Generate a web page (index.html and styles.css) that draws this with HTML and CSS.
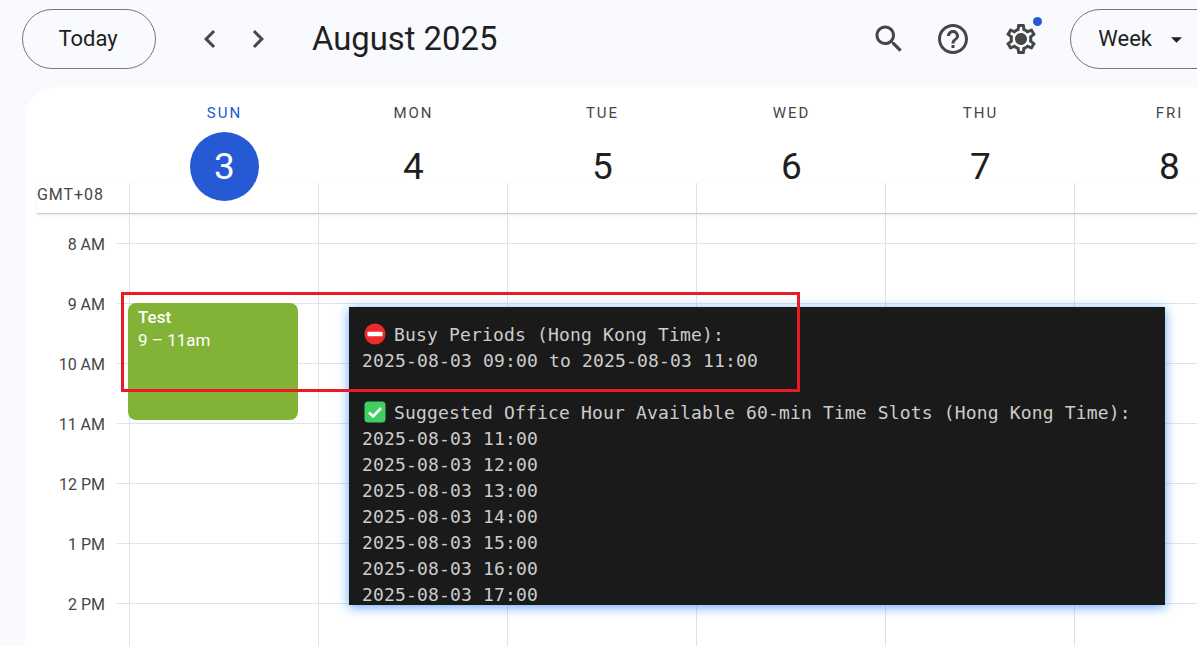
FILE: index.html

```html
<!DOCTYPE html>
<html lang="en">
<head>
    <meta charset="UTF-8">
    <title>Calendar - August 2025</title>
    <link rel="stylesheet" href="styles.css">
</head>
<body>
    <header class="topbar">
        <button class="pill today-btn">Today</button>
        <div class="nav-arrows">
            <span class="icon-btn"><svg viewBox="0 0 24 24"><path d="M15.41 7.41L14 6l-6 6 6 6 1.41-1.41L10.83 12z"/></svg></span>
            <span class="icon-btn"><svg viewBox="0 0 24 24"><path d="M10 6L8.59 7.41 13.17 12l-4.58 4.59L10 18l6-6z"/></svg></span>
        </div>
        <h1 class="month-title">August 2025</h1>
        <div class="topbar-right">
            <span class="icon-btn"><svg viewBox="0 0 24 24"><path d="M15.5 14h-.79l-.28-.27C15.41 12.59 16 11.11 16 9.5 16 5.91 13.09 3 9.5 3S3 5.91 3 9.5 5.91 16 9.5 16c1.61 0 3.09-.59 4.23-1.57l.27.28v.79l5 4.99L20.49 19l-4.99-5zm-6 0C7.01 14 5 11.99 5 9.5S7.01 5 9.5 5 14 7.01 14 9.5 11.99 14 9.5 14z"/></svg></span>
            <span class="icon-btn"><svg viewBox="0 0 24 24"><path d="M11 18h2v-2h-2v2zm1-16C6.48 2 2 6.48 2 12s4.48 10 10 10 10-4.48 10-10S17.52 2 12 2zm0 18c-4.41 0-8-3.59-8-8s3.59-8 8-8 8 3.59 8 8-3.59 8-8 8zm0-14c-2.21 0-4 1.79-4 4h2c0-1.1.9-2 2-2s2 .9 2 2c0 2-3 1.75-3 5h2c0-2.25 3-2.5 3-5 0-2.21-1.79-4-4-4z"/></svg></span>
            <span class="icon-btn settings-btn">
                <svg viewBox="0 0 24 24"><path d="M19.43 12.98c.04-.32.07-.64.07-.98 0-.34-.03-.66-.07-.98l2.11-1.65c.19-.15.24-.42.12-.64l-2-3.46c-.09-.16-.26-.25-.44-.25-.06 0-.12.01-.17.03l-2.49 1c-.52-.4-1.08-.73-1.69-.98l-.38-2.65C14.46 2.18 14.25 2 14 2h-4c-.25 0-.46.18-.49.42l-.38 2.65c-.61.25-1.17.59-1.69.98l-2.49-1c-.06-.02-.12-.03-.18-.03-.17 0-.34.09-.43.25l-2 3.46c-.13.22-.07.49.12.64l2.11 1.65c-.04.32-.07.65-.07.98 0 .33.03.66.07.98l-2.11 1.65c-.19.15-.24.42-.12.64l2 3.46c.09.16.26.25.44.25.06 0 .12-.01.17-.03l2.49-1c.52.4 1.08.73 1.69.98l.38 2.65c.03.24.24.42.49.42h4c.25 0 .46-.18.49-.42l.38-2.65c.61-.25 1.17-.59 1.69-.98l2.49 1c.06.02.12.03.18.03.17 0 .34-.09.43-.25l2-3.46c.12-.22.07-.49-.12-.64l-2.11-1.65zm-1.98-1.71c.04.31.05.52.05.73 0 .21-.02.43-.05.73l-.14 1.13.89.7 1.08.84-.7 1.21-1.27-.51-1.04-.42-.9.68c-.43.32-.84.56-1.25.73l-1.06.43-.16 1.13-.2 1.35h-1.4l-.19-1.35-.16-1.13-1.06-.43c-.43-.18-.83-.41-1.23-.71l-.91-.7-1.06.43-1.27.51-.7-1.21 1.08-.84.89-.7-.14-1.13c-.03-.31-.05-.54-.05-.74s.02-.43.05-.73l.14-1.13-.89-.7-1.08-.84.7-1.21 1.27.51 1.04.42.9-.68c.43-.32.84-.56 1.25-.73l1.06-.43.16-1.13.2-1.35h1.39l.19 1.35.16 1.13 1.06.43c.43.18.83.41 1.23.71l.91.7 1.06-.43 1.27-.51.7 1.21-1.07.85-.89.7.14 1.13zM12 8c-2.21 0-4 1.79-4 4s1.79 4 4 4 4-1.79 4-4-1.79-4-4-4z"/></svg>
                <span class="notify-dot"></span>
            </span>
            <button class="pill view-btn">Week<svg class="caret" viewBox="0 0 10 5"><path d="M0 0h10L5 5z"/></svg></button>
        </div>
    </header>

    <main class="calendar">
        <div class="day-heads">
            <div class="day-head active"><span class="day-name">SUN</span><span class="day-num">3</span></div>
            <div class="day-head"><span class="day-name">MON</span><span class="day-num">4</span></div>
            <div class="day-head"><span class="day-name">TUE</span><span class="day-num">5</span></div>
            <div class="day-head"><span class="day-name">WED</span><span class="day-num">6</span></div>
            <div class="day-head"><span class="day-name">THU</span><span class="day-num">7</span></div>
            <div class="day-head"><span class="day-name">FRI</span><span class="day-num">8</span></div>
        </div>

        <div class="tz-row">
            <span class="tz-label">GMT+08</span>
            <div class="cell"></div><div class="cell"></div><div class="cell"></div>
            <div class="cell"></div><div class="cell"></div><div class="cell"></div>
        </div>

        <div class="hours">
            <div class="hour-row first">
                <span class="hour-label"></span><span class="tick"></span>
                <div class="cell"></div><div class="cell"></div><div class="cell"></div>
                <div class="cell"></div><div class="cell"></div><div class="cell"></div>
            </div>
            <div class="hour-row">
                <span class="hour-label"><span>8 AM</span></span><span class="tick"></span>
                <div class="cell"></div><div class="cell"></div><div class="cell"></div>
                <div class="cell"></div><div class="cell"></div><div class="cell"></div>
            </div>
            <div class="hour-row">
                <span class="hour-label"><span>9 AM</span></span><span class="tick"></span>
                <div class="cell">
                    <div class="event">
                        <strong>Test</strong>
                        <span>9 – 11am</span>
                    </div>
                </div>
                <div class="cell"></div><div class="cell"></div>
                <div class="cell"></div><div class="cell"></div><div class="cell"></div>
            </div>
            <div class="hour-row">
                <span class="hour-label"><span>10 AM</span></span><span class="tick"></span>
                <div class="cell"></div><div class="cell"></div><div class="cell"></div>
                <div class="cell"></div><div class="cell"></div><div class="cell"></div>
            </div>
            <div class="hour-row">
                <span class="hour-label"><span>11 AM</span></span><span class="tick"></span>
                <div class="cell"></div><div class="cell"></div><div class="cell"></div>
                <div class="cell"></div><div class="cell"></div><div class="cell"></div>
            </div>
            <div class="hour-row">
                <span class="hour-label"><span>12 PM</span></span><span class="tick"></span>
                <div class="cell"></div><div class="cell"></div><div class="cell"></div>
                <div class="cell"></div><div class="cell"></div><div class="cell"></div>
            </div>
            <div class="hour-row">
                <span class="hour-label"><span>1 PM</span></span><span class="tick"></span>
                <div class="cell"></div><div class="cell"></div><div class="cell"></div>
                <div class="cell"></div><div class="cell"></div><div class="cell"></div>
            </div>
            <div class="hour-row">
                <span class="hour-label"><span>2 PM</span></span><span class="tick"></span>
                <div class="cell"></div><div class="cell"></div><div class="cell"></div>
                <div class="cell"></div><div class="cell"></div><div class="cell"></div>
            </div>
        </div>
    </main>

    <!-- terminal output pasted over the calendar -->
    <section class="terminal">
        <div class="term-line"><svg class="emoji" viewBox="0 0 22 22"><circle cx="11" cy="11" r="10.5" fill="#ec2b2b"/><rect x="3.5" y="8.8" width="15" height="4.4" rx="0.6" fill="#fff"/></svg>Busy Periods (Hong Kong Time):</div>
        <div class="term-line">2025-08-03 09:00 to 2025-08-03 11:00</div>
        <div class="term-line"></div>
        <div class="term-line"><svg class="emoji" viewBox="0 0 22 22"><rect x="0.5" y="0.5" width="21" height="21" rx="3.5" fill="#3fcf63"/><path d="M5 11.5l4.2 4L17 7" fill="none" stroke="#fff" stroke-width="2.6"/></svg>Suggested Office Hour Available 60-min Time Slots (Hong Kong Time):</div>
        <div class="term-line">2025-08-03 11:00</div>
        <div class="term-line">2025-08-03 12:00</div>
        <div class="term-line">2025-08-03 13:00</div>
        <div class="term-line">2025-08-03 14:00</div>
        <div class="term-line">2025-08-03 15:00</div>
        <div class="term-line">2025-08-03 16:00</div>
        <div class="term-line">2025-08-03 17:00</div>
    </section>

    <div class="highlight-box"></div>
</body>
</html>
```

FILE: styles.css

```css
/* General page */
body {
    margin: 0;
    height: 646px;
    overflow: hidden;
    position: relative;
    background-color: #f8fafd;
    font-family: Roboto, "Open Sans", sans-serif;
    color: #1f1f1f;
}

/* Top bar */
.topbar {
    display: flex;
    align-items: center;
    height: 87px;
    padding: 0 0 9px 22px;
    box-sizing: border-box;
}

.pill {
    flex-shrink: 0;
    height: 60px;
    padding-bottom: 2px;
    border: 1px solid #747775;
    border-radius: 30px;
    background: none;
    color: #1f1f1f;
    font-family: inherit;
    font-size: 22px;
    box-sizing: border-box;
}

.today-btn {
    width: 134px;
    padding-left: 0;
    padding-right: 2px;
}

.nav-arrows {
    display: flex;
    margin-left: 30px;
}

.icon-btn {
    display: flex;
    justify-content: center;
    align-items: center;
    width: 48px;
    height: 48px;
    position: relative;
}

.icon-btn svg {
    width: 36px;
    height: 36px;
    fill: #444746;
}

.month-title {
    margin: 0 0 0 30px;
    font-size: 32.8px;
    font-weight: 400;
    white-space: nowrap;
}

.topbar-right {
    display: flex;
    align-items: center;
    gap: 16px;
    margin-left: 368px;
    flex-shrink: 0;
}

.settings-btn {
    margin-left: 4px;
}

.notify-dot {
    position: absolute;
    top: 2px;
    right: 3px;
    width: 9px;
    height: 9px;
    border-radius: 50%;
    background-color: #255ad4;
}

.view-btn {
    display: flex;
    align-items: center;
    justify-content: flex-start;
    width: 170px;
    padding-left: 27px;
    margin-left: 9px;
}

.caret {
    width: 11px;
    height: 6px;
    margin-left: 19px;
    margin-top: 2px;
    fill: #1f1f1f;
}

/* Calendar card */
.calendar {
    margin-left: 25px;
    height: 559px;
    overflow: hidden;
    background-color: #fff;
    border-top-left-radius: 32px;
}

.day-heads {
    display: flex;
    height: 96px;
    padding-left: 105px;
}

.day-head {
    flex: 0 0 189px;
    display: flex;
    flex-direction: column;
    align-items: center;
    padding-top: 16px;
    box-sizing: border-box;
}

.day-name {
    font-size: 15px;
    line-height: 20px;
    font-weight: 400;
    letter-spacing: 2px;
    color: #444746;
}

.day-num {
    width: 69px;
    height: 69px;
    margin-top: 9px;
    border-radius: 50%;
    font-size: 37px;
    line-height: 69px;
    text-align: center;
}

.day-head.active .day-name {
    color: #255ad4;
}

.day-head.active .day-num {
    background-color: #255ad4;
    color: #fff;
}

/* Row with the timezone, directly under the day heads */
.tz-row {
    display: flex;
    height: 30px;
    border-bottom: 1px solid #c7c9cc;
    box-shadow: 0 1px 3px rgba(60, 64, 67, 0.12);
    position: relative;
    margin-left: 12px;
}

.tz-label {
    flex: 0 0 92px;
    padding-top: 2px;
    box-sizing: border-box;
    font-size: 16px;
    line-height: 20px;
    letter-spacing: 0.95px;
    color: #444746;
    text-align: left;
    white-space: nowrap;
}

.cell {
    flex: 0 0 189px;
    box-sizing: border-box;
    border-left: 1px solid #dde3ea;
    position: relative;
}

/* Hour grid */
.hour-row {
    display: flex;
    height: 60px;
}

.hour-row.first {
    height: 29px;
}

.hour-row .cell,
.tick {
    border-top: 1px solid #dde3ea;
}

.hour-row.first .cell {
    border-top: none;
}

.hour-row.first .tick {
    border-top: none;
}

.hour-label {
    flex: 0 0 92px;
    box-sizing: border-box;
    padding-right: 12px;
    font-size: 16px;
    line-height: 20px;
    color: #444746;
    text-align: right;
}

.hour-label span {
    display: block;
    transform: translateY(-8px);
}

.tick {
    flex: 0 0 12px;
    box-sizing: border-box;
}

/* Event block */
.event {
    position: absolute;
    z-index: 1;
    top: -1px;
    left: -2px;
    width: 170px;
    height: 117px;
    padding: 3px 10px;
    box-sizing: border-box;
    display: flex;
    flex-direction: column;
    border-radius: 8px;
    background-color: #82b337;
    color: #fff;
    font-size: 17px;
    line-height: 23px;
}

.event strong {
    font-weight: 500;
}

/* Terminal pasted over the page */
.terminal {
    position: absolute;
    z-index: 2;
    top: 307px;
    left: 349px;
    width: 816px;
    height: 298px;
    padding: 14px 13px 0;
    box-sizing: border-box;
    overflow: hidden;
    background-color: #1a1a1a;
    box-shadow: 0 2px 11px rgba(60, 145, 250, 0.8);
    color: #cccccc;
    font-family: "DejaVu Sans Mono", monospace;
    font-size: 18px;
    letter-spacing: 0.16px;
}

.term-line {
    display: flex;
    align-items: center;
    height: 26px;
    white-space: pre;
}

.emoji {
    width: 22px;
    height: 22px;
    margin: 0 8px 0 2px;
    flex-shrink: 0;
}

/* Red annotation rectangle */
.highlight-box {
    position: absolute;
    z-index: 3;
    top: 292px;
    left: 121px;
    width: 679px;
    height: 100px;
    box-sizing: border-box;
    border: 3px solid #e81c24;
}
```
